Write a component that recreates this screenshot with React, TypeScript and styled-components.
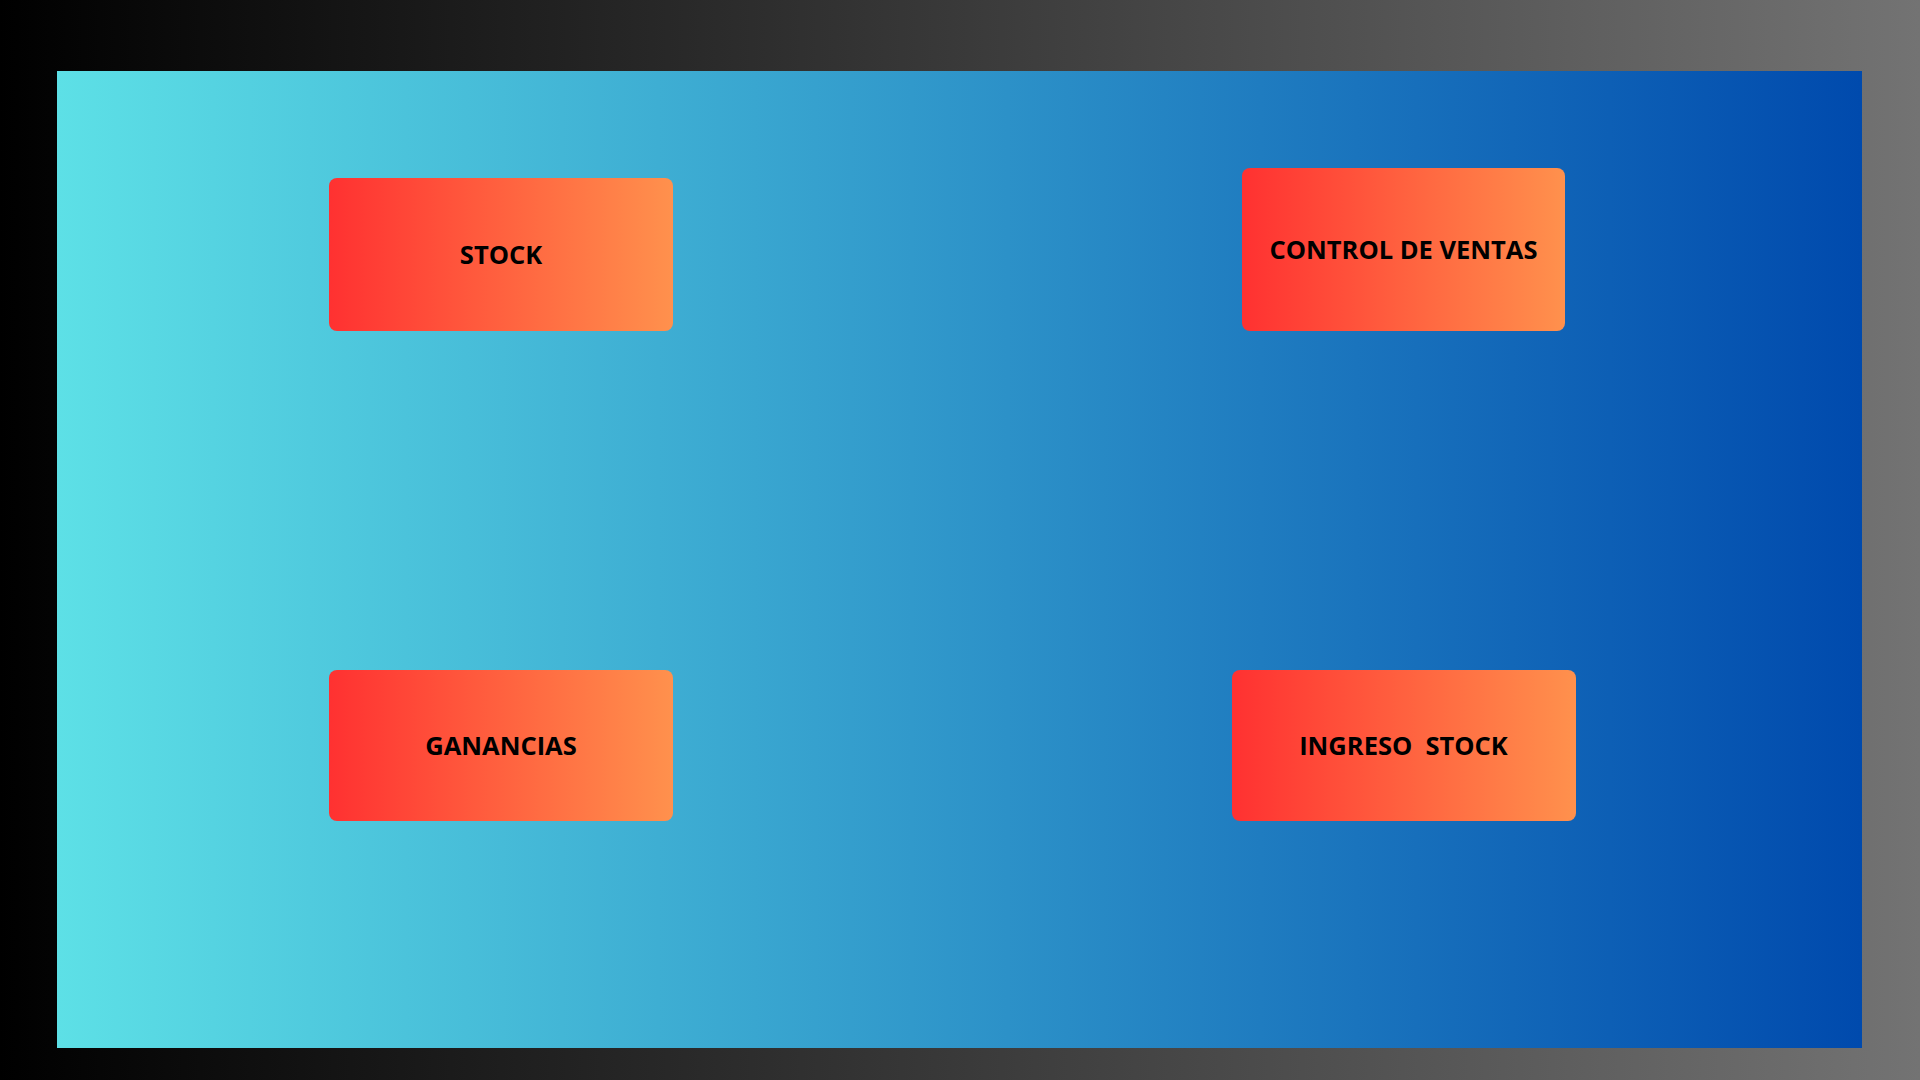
import React from 'react';
import styled, { createGlobalStyle } from 'styled-components';

const GlobalStyle = createGlobalStyle`
  html, body {
    margin: 0;
    padding: 0;
    height: 100%;
  }
  body {
    font-family: 'Open Sans', 'Liberation Sans', sans-serif;
  }
`;

const Frame = styled.div`
  width: 1920px;
  height: 1080px;
  box-sizing: border-box;
  padding: 71px 58px 32px 57px;
  background: linear-gradient(90deg, #000000 0%, #737373 100%);
  display: flex;
`;

const Board = styled.main`
  flex: 1;
  box-sizing: border-box;
  padding-top: 97px;
  background: linear-gradient(90deg, #5de0e6 0%, #004aad 100%);
  display: grid;
  grid-template-columns: 888px 1fr;
  grid-template-rows: 163px 151px;
  row-gap: 339px;
  justify-items: center;
  align-items: end;
  align-content: start;
`;

const MenuButton = styled.button<{ $w: number; $h: number }>`
  width: ${({ $w }) => $w}px;
  height: ${({ $h }) => $h}px;
  box-sizing: border-box;
  border: none;
  border-radius: 8px;
  background: linear-gradient(90deg, #ff3131 0%, #ff914d 100%);
  color: #000;
  font-family: 'Open Sans', 'Liberation Sans', sans-serif;
  font-weight: 700;
  font-size: 25.5px;
  line-height: 1;
  white-space: pre;
  cursor: pointer;
  padding: 0;
  display: flex;
  align-items: center;
  justify-content: center;
`;

const items = [
    { label: 'STOCK', w: 344, h: 153 },
    { label: 'CONTROL DE VENTAS', w: 323, h: 163 },
    { label: 'GANANCIAS', w: 344, h: 151 },
    { label: 'INGRESO  STOCK', w: 344, h: 151 },
];

export default function App() {
    return (
        <>
            <GlobalStyle />
            <Frame>
                <Board>
                    {items.map((item) => (
                        <MenuButton key={item.label} $w={item.w} $h={item.h}>
                            {item.label}
                        </MenuButton>
                    ))}
                </Board>
            </Frame>
        </>
    );
}
